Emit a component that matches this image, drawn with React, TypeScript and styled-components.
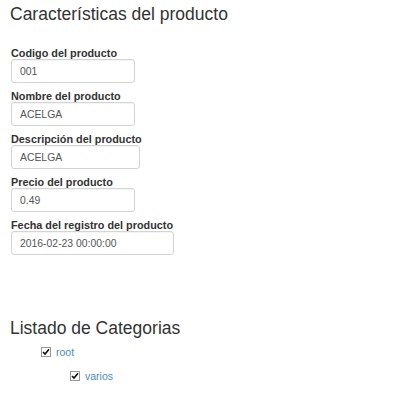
import React from "react";
import styled, { createGlobalStyle } from "styled-components";

const Global = createGlobalStyle`
  html, body { margin: 0; padding: 0; background: #fff; }
  body { font-family: "Liberation Sans", Arial, sans-serif; color: #333; }
`;

const Page = styled.div`
  padding: 4px 10px 0 10px;
  display: flex;
  flex-direction: column;
`;

const Heading = styled.h3<{ $gap: number }>`
  margin: 0 0 ${(p) => p.$gap}px 0;
  font-size: 17.5px;
  line-height: 20px;
  font-weight: normal;
  color: #333;
`;

const Form = styled.div`
  display: flex;
  flex-direction: column;
  gap: 7px;
  padding-left: 1px;
`;

const Field = styled.div`
  display: flex;
  flex-direction: column;
  align-items: flex-start;
`;

const Label = styled.label`
  font-size: 10.85px;
  line-height: 12px;
  font-weight: bold;
  color: #333;
`;

const Input = styled.input<{ $w: number }>`
  box-sizing: border-box;
  width: ${(p) => p.$w}px;
  height: 24px;
  margin: 0;
  padding: 0 8px;
  font-family: "Liberation Sans", Arial, sans-serif;
  font-size: 10.4px;
  color: #555;
  background: #fff;
  border: 1px solid #d4d4d4;
  border-radius: 3px;
  box-shadow: inset 0 1px 1px rgba(0, 0, 0, 0.05);
  outline: none;
`;

const Tree = styled.ul<{ $indent: number }>`
  list-style: none;
  margin: 0;
  padding: 0 0 0 ${(p) => p.$indent}px;
`;

const Item = styled.li`
  display: flex;
  flex-direction: column;
`;

const Row = styled.div`
  display: flex;
  align-items: center;
  gap: 5px;
  height: 24px;
`;

const Box = styled.span`
  box-sizing: border-box;
  width: 10px;
  height: 10px;
  border: 1px solid #999;
  background: #fff;
  display: inline-flex;
  align-items: center;
  justify-content: center;
`;

const Link = styled.a`
  font-size: 10.5px;
  color: #4a8bcb;
  text-decoration: none;
`;

const Check = () => (
  <Box>
    <svg width="8" height="8" viewBox="0 0 8 8">
      <path d="M1 4 L3 6 L7 1.2" stroke="#111" strokeWidth="1.6" fill="none" />
    </svg>
  </Box>
);

const fields = [
  { label: "Codigo del producto", value: "001", w: 124 },
  { label: "Nombre del producto", value: "ACELGA", w: 124 },
  { label: "Descripción del producto", value: "ACELGA", w: 129 },
  { label: "Precio del producto", value: "0.49", w: 124 },
  { label: "Fecha del registro del producto", value: "2016-02-23 00:00:00", w: 163 },
];

export default function App() {
  return (
    <>
      <Global />
      <Page>
        <Heading $gap={23}>Características del producto</Heading>
        <Form>
          {fields.map((f) => (
            <Field key={f.label}>
              <Label>{f.label}</Label>
              <Input $w={f.w} defaultValue={f.value} readOnly />
            </Field>
          ))}
        </Form>
        <Heading $gap={2} style={{ marginTop: 63 }}>Listado de Categorias</Heading>
        <Tree $indent={31}>
          <Item>
            <Row>
              <Check />
              <Link href="#">root</Link>
            </Row>
            <Tree $indent={29}>
              <Item>
                <Row>
                  <Check />
                  <Link href="#">varios</Link>
                </Row>
              </Item>
            </Tree>
          </Item>
        </Tree>
      </Page>
    </>
  );
}
